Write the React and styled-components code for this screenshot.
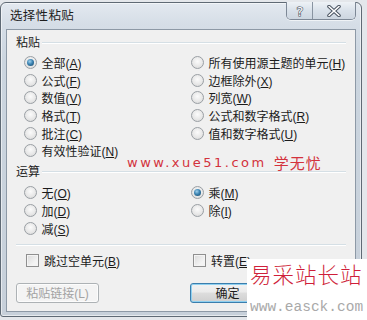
import React from 'react'
import styled, { createGlobalStyle } from 'styled-components'

const Global = createGlobalStyle`
  html, body { margin: 0; padding: 0; }
  body {
    background: #e3e6ea;
    font-family: "Liberation Sans", "Noto Sans CJK SC", sans-serif;
    font-size: 12px;
    color: #1b1b1b;
  }
`

const Screen = styled.div`
  position: relative;
  width: 367px;
  height: 320px;
  padding-top: 2px;
  box-sizing: border-box;
  overflow: hidden;
  background: #e4e7eb;
`

const Win = styled.div`
  width: 362px;
  height: 315px;
  box-sizing: border-box;
  border: 1px solid #5f6a75;
  border-radius: 6px 6px 3px 3px;
  background: linear-gradient(180deg, #e3e9f0 0%, #d6dee7 20px, #cbd5df 60px, #c7d0da 100%);
  box-shadow: inset 0 0 0 1px rgba(255,255,255,0.55);
  display: flex;
  flex-direction: column;
`

const TitleBar = styled.div`
  height: 26px;
  display: flex;
  align-items: flex-start;
  padding-left: 9px;
  padding-right: 5px;
`

const Title = styled.div`
  flex: 1;
  line-height: 26px;
  font-size: 12.5px;
  letter-spacing: 0.3px;
  color: #1e1e1e;
`

const CapButtons = styled.div`
  display: flex;
  margin-top: -1px;
  border: 1px solid #7d8896;
  border-top: none;
  border-radius: 0 0 5px 5px;
  overflow: hidden;
  box-shadow: 0 1px 0 rgba(255,255,255,0.6);
`

const CapButton = styled.div`
  width: ${p => p.$w}px;
  height: 17px;
  display: flex;
  align-items: center;
  justify-content: center;
  background: linear-gradient(180deg, #eef2f6, #d9e1ea 50%, #cdd6e0);
  & + & { border-left: 1px solid #8994a1; }
`

const Client = styled.div`
  margin: 0 5px;
  height: 283px;
  box-sizing: border-box;
  border: 1px solid #8d99a6;
  background: #f0f0f0;
  padding: 5px 9px 0 9px;
  display: flex;
  flex-direction: column;
`

const GroupHead = styled.div`
  display: flex;
  align-items: center;
  height: 16px;
  line-height: 16px;
  margin-top: ${p => p.$mt || 0}px;
  &::after {
    content: '';
    flex: 1;
    margin-left: 2px;
    height: 0;
    border-top: 1px solid #d5dfe5;
    border-bottom: 1px solid #ffffff;
  }
`

const OptionGrid = styled.div`
  display: grid;
  grid-template-columns: 167px 1fr;
  grid-auto-flow: column;
  grid-template-rows: repeat(${p => p.$rows}, ${p => p.$rh}px);
  padding-left: ${p => p.$pl || 8}px;
  margin-top: ${p => p.$mt || 0}px;
`

const Option = styled.div`
  display: flex;
  align-items: center;
  gap: ${p => p.$gap || 4.5}px;
  white-space: nowrap;
  color: #1b1b1b;
`

const RadioCircle = styled.span`
  position: relative;
  width: 13px;
  height: 13px;
  box-sizing: border-box;
  border-radius: 50%;
  border: 1px solid #9a9fa4;
  background: radial-gradient(circle at 50% 40%, #fbfbfb 0%, #e8e8e8 55%, #d4d4d4 100%);
  flex: none;
  &::after {
    content: '';
    display: ${p => p.$on ? 'block' : 'none'};
    position: absolute;
    left: 2px;
    top: 2px;
    width: 7px;
    height: 7px;
    border-radius: 50%;
    background: radial-gradient(circle at 40% 35%, #9fd0ec 0%, #3c84b3 45%, #12405f 100%);
  }
`

const CheckBox = styled.span`
  width: 13px;
  height: 13px;
  box-sizing: border-box;
  border: 1px solid #8f8f8f;
  background: linear-gradient(135deg, #d9d9d9, #f4f4f4 70%);
  box-shadow: inset 0 0 0 1px #f4f4f4;
  flex: none;
`

const Key = styled.span`
  text-decoration: underline;
  text-underline-offset: 1px;
`

const Separator = styled.div`
  margin-top: ${p => p.$mt}px;
  border-top: 1px solid #d5dfe5;
  border-bottom: 1px solid #ffffff;
`

const ButtonRow = styled.div`
  display: flex;
  align-items: center;
  margin-top: 14px;
`

const Button = styled.div`
  width: ${p => p.$w}px;
  height: 20px;
  box-sizing: border-box;
  border-radius: 3px;
  display: flex;
  align-items: center;
  justify-content: center;
  font-size: 12px;
  color: ${p => p.$disabled ? '#a3a3a3' : '#1b1b1b'};
  border: 1px solid ${p => p.$disabled ? '#adb2b5' : p.$default ? '#3b7ead' : '#707070'};
  background: ${p => p.$disabled ? '#f4f4f4' : 'linear-gradient(180deg, #f2f2f2 0%, #ebebeb 45%, #dddddd 50%, #cfcfcf 100%)'};
  box-shadow: ${p => p.$default ? 'inset 0 0 0 1px #8fd0f0' : 'inset 0 0 0 1px rgba(255,255,255,0.7)'};
  margin-left: ${p => p.$ml || 0}px;
`

const Spacer = styled.div`
  flex: 1;
`

const XueMark = styled.div`
  position: absolute;
  left: 127px;
  top: 152px;
  display: flex;
  align-items: center;
  height: 20px;
  color: #d3323c;
  font-family: "DejaVu Sans", "Noto Sans CJK SC", sans-serif;
  font-size: 13px;
  letter-spacing: 2.5px;
  white-space: nowrap;
`

const XueCn = styled.span`
  font-family: "Noto Sans CJK SC", sans-serif;
  font-size: 15px;
  letter-spacing: 1px;
  margin-left: 7px;
`

const EasckMark = styled.div`
  position: absolute;
  left: 247px;
  top: 259px;
  width: 120px;
  height: 61px;
  background: #ffffff;
  display: flex;
  flex-direction: column;
  align-items: flex-start;
  padding-left: 3px;
  box-sizing: border-box;
`

const EasckCn = styled.div`
  font-family: "Noto Sans CJK SC", sans-serif;
  font-weight: 300;
  font-size: 21.5px;
  letter-spacing: 1px;
  line-height: 30px;
  color: #cf1f3a;
  white-space: nowrap;
`

const EasckUrl = styled.div`
  font-family: "Liberation Mono", monospace;
  font-size: 14.5px;
  line-height: 18px;
  margin-top: 9px;
  color: #a9a9a9;
  white-space: nowrap;
`

const Opt = ({ label, k, on }) => (
  <Option>
    <RadioCircle $on={on} />
    <span>{label}(<Key>{k}</Key>)</span>
  </Option>
)

const Chk = ({ label, k }) => (
  <Option $gap={5}>
    <CheckBox />
    <span>{label}(<Key>{k}</Key>)</span>
  </Option>
)

export default function App() {
  return (
    <Screen>
      <Global />
      <Win>
        <TitleBar>
          <Title>选择性粘贴</Title>
          <CapButtons>
            <CapButton $w={25}>
              <svg width="12" height="14" viewBox="0 0 12 14">
                <text x="6" y="12" textAnchor="middle" fontFamily="DejaVu Sans, sans-serif" fontSize="13" fill="#fff" stroke="#4a5461" strokeWidth="1.2" paintOrder="stroke">?</text>
              </svg>
            </CapButton>
            <CapButton $w={42}>
              <svg width="14" height="12" viewBox="0 0 14 12">
                <path d="M2 1.5 L12 10.5 M12 1.5 L2 10.5" stroke="#4a5461" strokeWidth="3.6" strokeLinecap="round" />
                <path d="M2 1.5 L12 10.5 M12 1.5 L2 10.5" stroke="#ffffff" strokeWidth="1.6" strokeLinecap="round" />
              </svg>
            </CapButton>
          </CapButtons>
        </TitleBar>
        <Client>
          <GroupHead>粘贴</GroupHead>
          <OptionGrid $rows={6} $rh={17.7} $mt={2.5}>
            <Opt label="全部" k="A" on />
            <Opt label="公式" k="F" />
            <Opt label="数值" k="V" />
            <Opt label="格式" k="T" />
            <Opt label="批注" k="C" />
            <Opt label="有效性验证" k="N" />
            <Opt label="所有使用源主题的单元" k="H" />
            <Opt label="边框除外" k="X" />
            <Opt label="列宽" k="W" />
            <Opt label="公式和数字格式" k="R" />
            <Opt label="值和数字格式" k="U" />
          </OptionGrid>
          <GroupHead $mt={4.6}>运算</GroupHead>
          <OptionGrid $rows={3} $rh={18} $mt={3.2}>
            <Opt label="无" k="O" />
            <Opt label="加" k="D" />
            <Opt label="减" k="S" />
            <Opt label="乘" k="M" on />
            <Opt label="除" k="I" />
          </OptionGrid>
          <Separator $mt={6.5} />
          <OptionGrid $rows={1} $rh={16} $mt={7} $pl={10}>
            <Chk label="跳过空单元" k="B" />
            <Chk label="转置" k="E" />
          </OptionGrid>
          <ButtonRow>
            <Button $w={83} $disabled>粘贴链接(L)</Button>
            <Spacer />
            <Button $w={75} $default>确定</Button>
            <Button $w={75} $ml={6} />
          </ButtonRow>
        </Client>
      </Win>
      <XueMark>
        www.xue51.com<XueCn>学无忧</XueCn>
      </XueMark>
      <EasckMark>
        <EasckCn>易采站长站</EasckCn>
        <EasckUrl>www.easck.com</EasckUrl>
      </EasckMark>
    </Screen>
  )
}
